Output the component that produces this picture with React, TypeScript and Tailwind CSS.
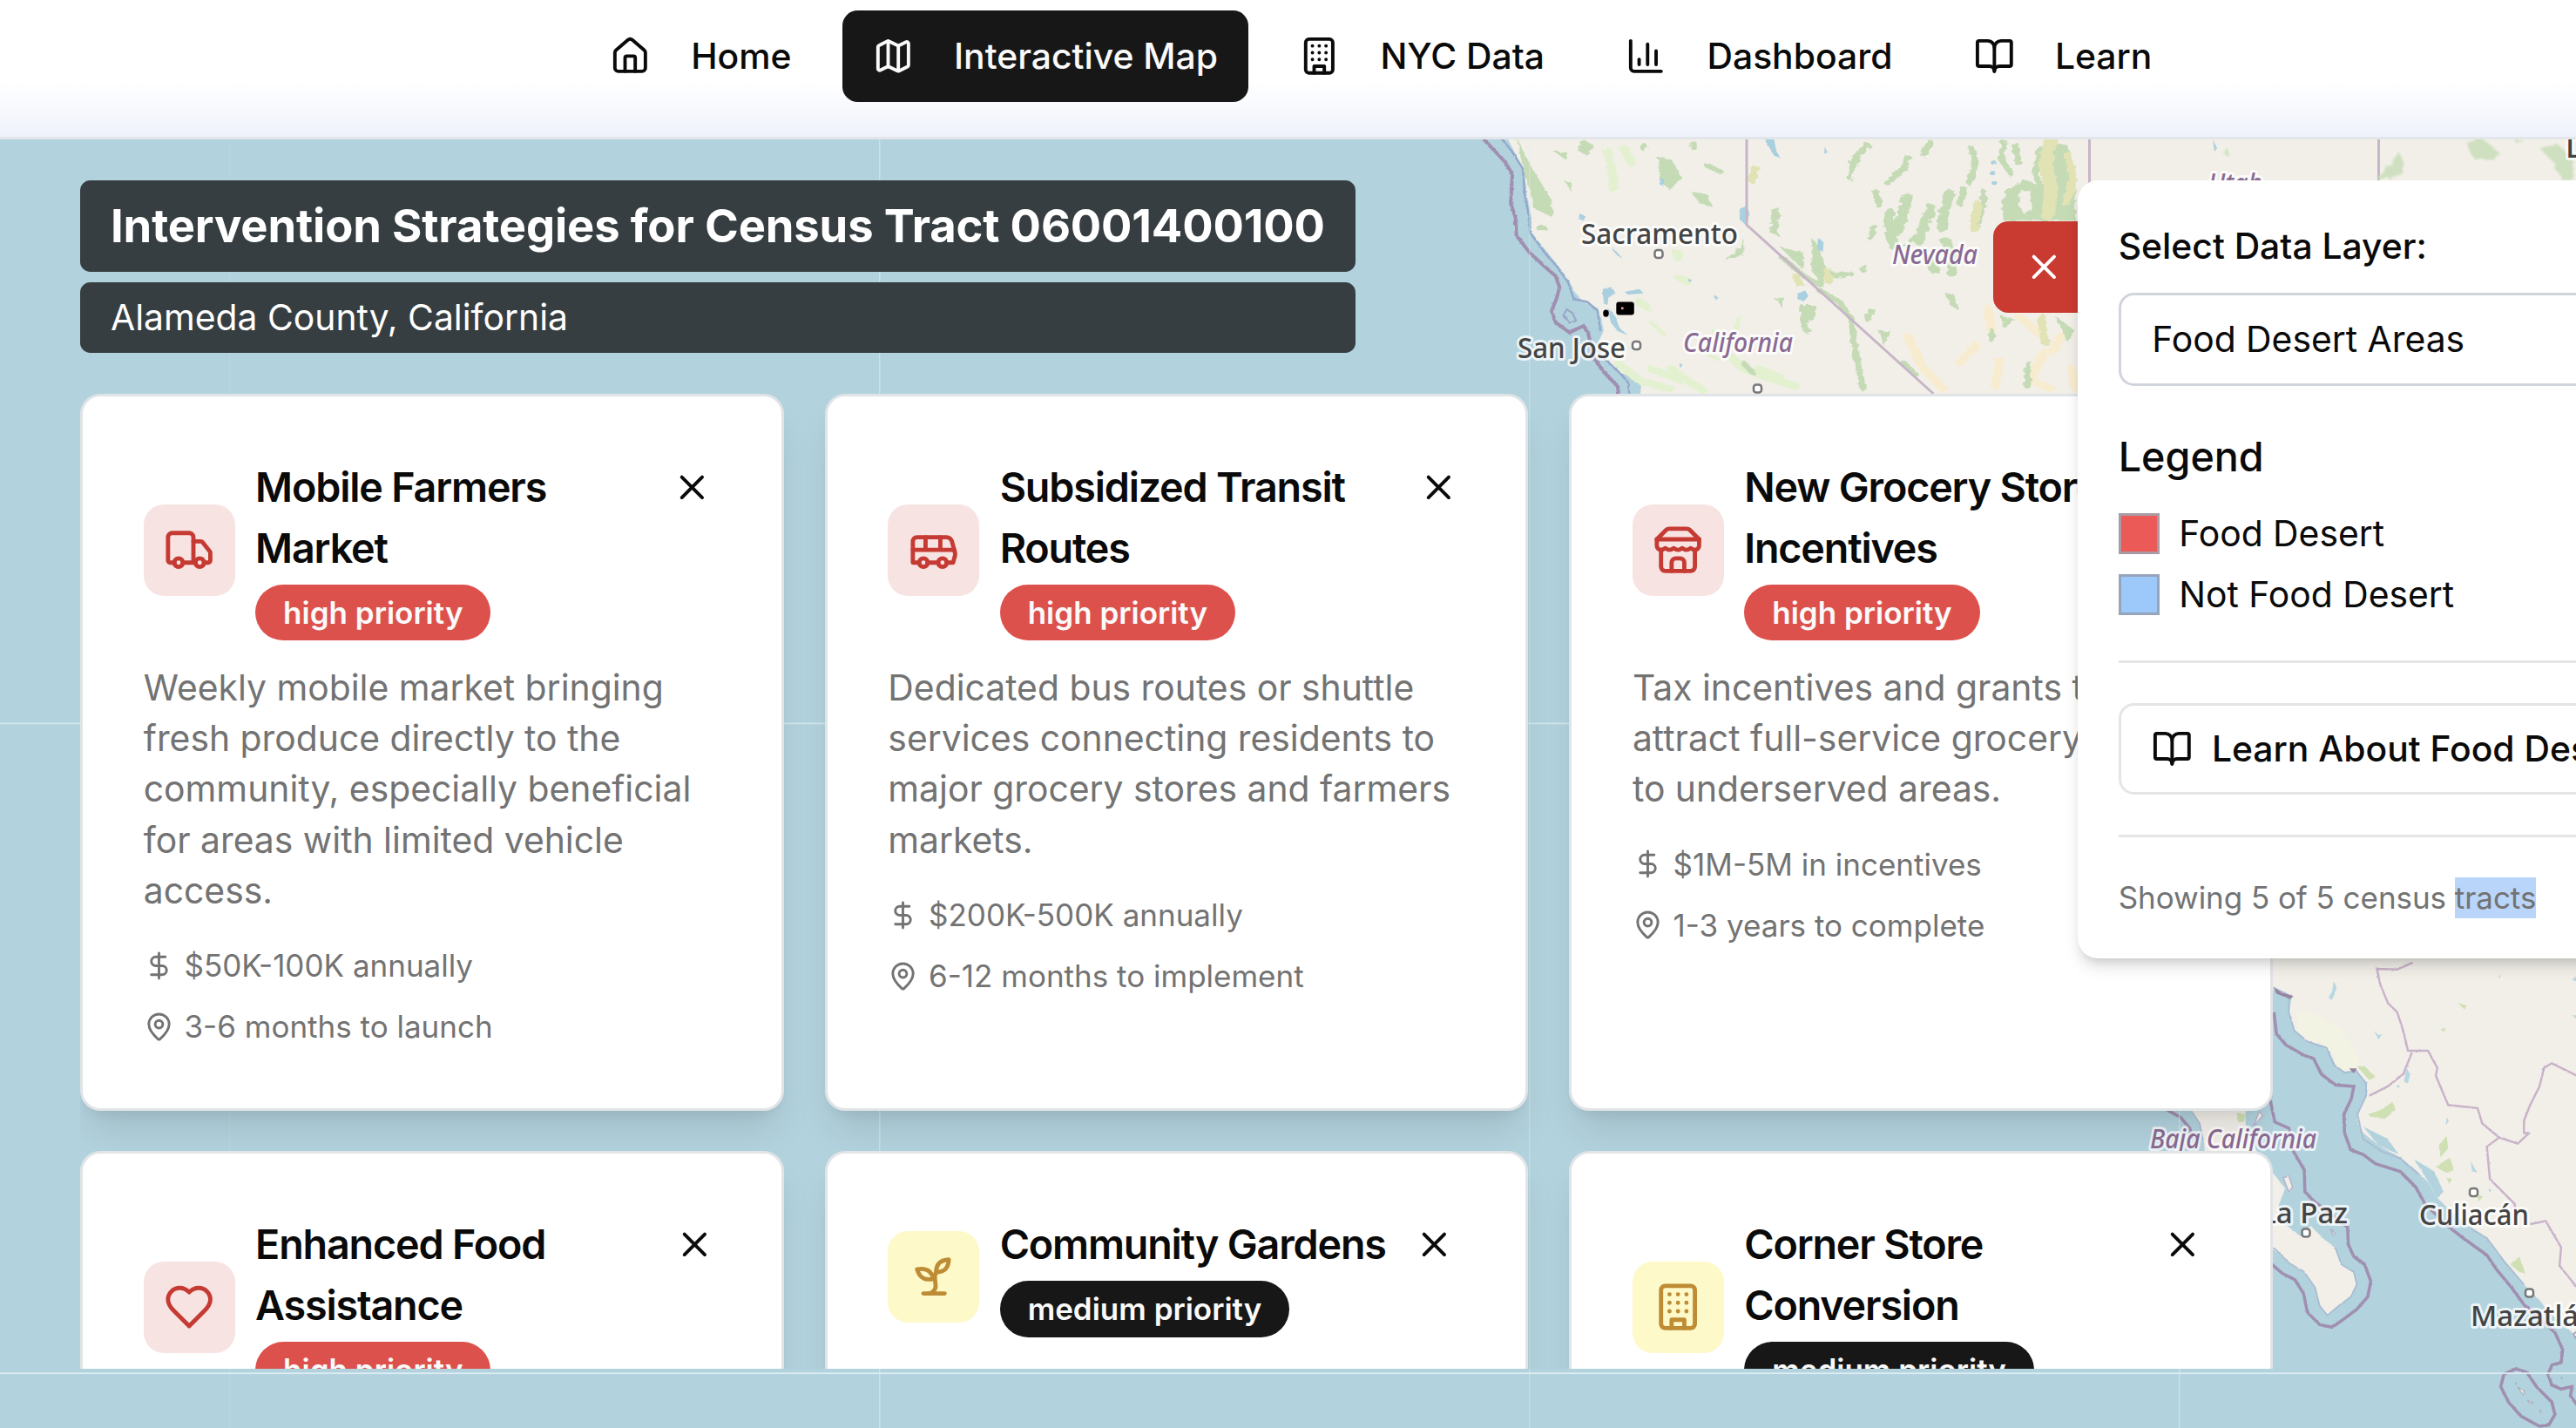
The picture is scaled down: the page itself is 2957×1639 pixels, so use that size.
import React from "react";

type IconName =
  | "home" | "map" | "building" | "chart" | "book" | "x"
  | "truck" | "bus" | "store" | "heart" | "sprout" | "dollar" | "pin";

const glyphs: Record<IconName, React.ReactNode> = {
  home: (
    <>
      <path d="M15 21v-8a1 1 0 0 0-1-1h-4a1 1 0 0 0-1 1v8" />
      <path d="M3 10a2 2 0 0 1 .709-1.528l7-5.999a2 2 0 0 1 2.582 0l7 5.999A2 2 0 0 1 21 10v9a2 2 0 0 1-2 2H5a2 2 0 0 1-2-2z" />
    </>
  ),
  map: (
    <>
      <path d="M14.106 5.553a2 2 0 0 0 1.788 0l3.659-1.83A1 1 0 0 1 21 4.619v12.764a1 1 0 0 1-.553.894l-4.553 2.277a2 2 0 0 1-1.788 0l-4.212-2.106a2 2 0 0 0-1.788 0l-3.659 1.83A1 1 0 0 1 3 19.381V6.618a1 1 0 0 1 .553-.894l4.553-2.277a2 2 0 0 1 1.788 0z" />
      <path d="M15 5.764v15" />
      <path d="M9 3.236v15" />
    </>
  ),
  building: (
    <>
      <rect width="16" height="20" x="4" y="2" rx="2" ry="2" />
      <path d="M9 22v-4h6v4" />
      <path d="M8 6h.01M16 6h.01M12 6h.01M12 10h.01M12 14h.01M16 10h.01M16 14h.01M8 10h.01M8 14h.01" />
    </>
  ),
  chart: (
    <>
      <path d="M3 3v16a2 2 0 0 0 2 2h16" />
      <path d="M18 17V9" />
      <path d="M13 17V5" />
      <path d="M8 17v-3" />
    </>
  ),
  book: (
    <>
      <path d="M12 7v14" />
      <path d="M3 18a1 1 0 0 1-1-1V4a1 1 0 0 1 1-1h5a4 4 0 0 1 4 4 4 4 0 0 1 4-4h5a1 1 0 0 1 1 1v13a1 1 0 0 1-1 1h-6a3 3 0 0 0-3 3 3 3 0 0 0-3-3z" />
    </>
  ),
  x: <path d="M18 6 6 18M6 6l12 12" />,
  truck: (
    <>
      <path d="M14 18V6a2 2 0 0 0-2-2H4a2 2 0 0 0-2 2v11a1 1 0 0 0 1 1h2" />
      <path d="M15 18H9" />
      <path d="M19 18h2a1 1 0 0 0 1-1v-3.65a1 1 0 0 0-.22-.624l-3.48-4.35A1 1 0 0 0 17.52 8H14" />
      <circle cx="17" cy="18" r="2" />
      <circle cx="7" cy="18" r="2" />
    </>
  ),
  bus: (
    <>
      <path d="M8 6v6M15 6v6M2 12h19.6" />
      <path d="M18 18h3s.5-1.7.8-2.8c.1-.4.2-.8.2-1.2 0-.4-.1-.8-.2-1.2l-1.4-5C20.1 6.8 19.1 6 18 6H4a2 2 0 0 0-2 2v10h3" />
      <circle cx="7" cy="18" r="2" />
      <path d="M9 18h5" />
      <circle cx="16" cy="18" r="2" />
    </>
  ),
  store: (
    <>
      <path d="m2 7 4.41-4.41A2 2 0 0 1 7.83 2h8.34a2 2 0 0 1 1.42.59L22 7" />
      <path d="M4 12v8a2 2 0 0 0 2 2h12a2 2 0 0 0 2-2v-8" />
      <path d="M15 22v-4a2 2 0 0 0-2-2h-2a2 2 0 0 0-2 2v4" />
      <path d="M2 7h20" />
      <path d="M22 7v3a2 2 0 0 1-2 2a2.7 2.7 0 0 1-1.59-.63.7.7 0 0 0-.82 0A2.7 2.7 0 0 1 16 12a2.7 2.7 0 0 1-1.59-.63.7.7 0 0 0-.82 0A2.7 2.7 0 0 1 12 12a2.7 2.7 0 0 1-1.59-.63.7.7 0 0 0-.82 0A2.7 2.7 0 0 1 8 12a2.7 2.7 0 0 1-1.59-.63.7.7 0 0 0-.82 0A2.7 2.7 0 0 1 4 12a2 2 0 0 1-2-2V7" />
    </>
  ),
  heart: (
    <path d="M19 14c1.49-1.46 3-3.21 3-5.5A5.5 5.5 0 0 0 16.5 3c-1.76 0-3 .5-4.5 2-1.5-1.5-2.74-2-4.5-2A5.5 5.5 0 0 0 2 8.5c0 2.3 1.5 4.05 3 5.5l7 7Z" />
  ),
  sprout: (
    <>
      <path d="M7 20h10" />
      <path d="M10 20c5.5-2.5.8-6.4 3-10" />
      <path d="M9.5 9.4c1.1.8 1.8 2.2 2.3 3.7-2 .4-3.5.4-4.8-.3-1.2-.6-2.3-1.9-3-4.2 2.8-.5 4.4 0 5.5.8z" />
      <path d="M14.1 6a7 7 0 0 0-1.1 4c1.9-.1 3.3-.6 4.3-1.4 1-1 1.6-2.3 1.7-4.6-2.7.1-4 1-4.9 2z" />
    </>
  ),
  dollar: (
    <>
      <path d="M12 2v20" />
      <path d="M17 5H9.5a3.5 3.5 0 0 0 0 7h5a3.5 3.5 0 0 1 0 7H6" />
    </>
  ),
  pin: (
    <>
      <path d="M20 10c0 4.993-5.539 10.193-7.399 11.799a1 1 0 0 1-1.202 0C9.539 20.193 4 14.993 4 10a8 8 0 0 1 16 0" />
      <circle cx="12" cy="10" r="3" />
    </>
  ),
};

function Icon({ name, className }: { name: IconName; className: string }) {
  return (
    <svg
      viewBox="0 0 24 24"
      fill="none"
      stroke="currentColor"
      strokeWidth="2"
      strokeLinecap="round"
      strokeLinejoin="round"
      className={"shrink-0 " + className}
    >
      {glyphs[name]}
    </svg>
  );
}

/* ---------- Base map ---------- */

type Label = { text: string; x: number; y: number; w?: number; size: number; italic?: boolean; end?: boolean };

const labels: Label[] = [
  { text: "Sacramento", x: 1815, y: 279.5, w: 180, size: 33 },
  { text: "San Jose", x: 1742, y: 410.5, w: 124, size: 33 },
  { text: "Nevada", x: 2172, y: 302.5, w: 98, size: 30, italic: true },
  { text: "California", x: 1932, y: 403.5, w: 126, size: 30, italic: true },
  { text: "Utah", x: 2535, y: 221, w: 62, size: 30, italic: true },
  { text: "Denver", x: 2945, y: 180.5, size: 35 },
  { text: "Baja California", x: 2468, y: 1317.5, w: 191, size: 30, italic: true },
  { text: "La Paz", x: 2695, y: 1404, size: 33, end: true },
  { text: "Culiacán", x: 2777, y: 1406, w: 126, size: 33 },
  { text: "Mazatlán", x: 2836, y: 1521.5, size: 33 },
];

const towns: [number, number][] = [
  [1904, 291.5], [1878.5, 396.5], [2017.5, 446], [2647, 1415], [2839.5, 1368.5], [2903.5, 1484],
];

function BaseMap() {
  return (
    <svg className="absolute inset-0 h-full w-full" viewBox="0 160 2957 1479" preserveAspectRatio="none">
      <defs>
        <filter id="rough" x="-5%" y="-5%" width="110%" height="110%">
          <feTurbulence type="fractalNoise" baseFrequency="0.06" numOctaves="3" seed="4" />
          <feDisplacementMap in="SourceGraphic" scale="17" />
          <feGaussianBlur stdDeviation="1.3" />
        </filter>
        <filter id="jag" x="-5%" y="-5%" width="110%" height="110%">
          <feTurbulence type="fractalNoise" baseFrequency="0.09" numOctaves="2" seed="9" />
          <feDisplacementMap in="SourceGraphic" scale="6" xChannelSelector="R" yChannelSelector="G" />
          <feGaussianBlur stdDeviation="0.9" />
        </filter>
      </defs>
      <rect x="0" y="160" width="2957" height="1479" fill="#b2d2dd" />

      {/* Northern California, Nevada and Utah */}
      <g transform="translate(1680 150) scale(0.4592 0.3333)" filter="url(#jag)">
        <path
          fill="#f2efe9"
          d="M100 0 130 80 152 140 158 220 170 300 170 350 210 420 240 470 265 520 280 560 300 590 335 610 345 650 350 690 340 720 345 770 370 810 395 840 430 835 445 870 440 930H2800V0Z"
        />
        <path
          fill="none" stroke="#93a9cb" strokeWidth="2.5" vectorEffect="non-scaling-stroke"
          d="M85 10 120 70 148 130 153 220 164 300 166 350 206 425 235 470 262 525 276 580 310 590 335 620 342 690M340 770 395 840 412 870 415 920"
        />
        <path
          fill="none" stroke="#a08fb0" strokeWidth="4" vectorEffect="non-scaling-stroke"
          d="M30 0 75 65 105 110 122 150 118 250 130 300 132 360 165 420 205 470 230 500 240 540 232 580 220 620 230 660 265 695 300 672 312 700 325 780 350 830 385 880 390 930"
        />
        <path
          fill="none" stroke="#9aa6c6" strokeWidth="2" vectorEffect="non-scaling-stroke"
          d="M258 615 250 635 265 662 282 655 272 628Z"
        />
      </g>

      <g transform="translate(1680 150) scale(0.4592 0.3333)" filter="url(#rough)" strokeLinecap="round" fill="none">
        {/* pale grassland */}
        <g stroke="#e3f1d1" strokeWidth="24">
          <path d="M360 70 370 130 375 200M400 60 420 110M535 420V440M385 800 440 860 520 890M520 820 570 870 600 895M670 780 700 820 760 850 830 880M440 590 460 610M540 505 560 520M470 820 540 860M740 820 790 850" />
        </g>
        <g stroke="#e3f1d1" strokeWidth="12">
          <path d="M470 660 500 700M600 760 640 790M690 640 680 690M630 690 640 720" />
        </g>
        {/* deserts and dry basins */}
        <g stroke="#f8ecd0" strokeWidth="24">
          <path d="M1310 610 1320 690M1110 710 1150 820 1200 890M1240 800 1280 740M1340 790 1330 880M1450 760 1420 860 1470 890M1500 700 1470 760M1390 640 1440 700M1520 820 1530 890" />
        </g>
        {/* forests */}
        <g fill="#c4dbb5">
          <path d="M130 20 160 100 190 170 220 240 225 300 180 270 165 200 150 130ZM485 90 520 100 545 160 515 205 490 170ZM285 70 300 30 325 50 310 85ZM225 70 260 75 255 100ZM250 170 270 180 270 210ZM570 210 610 220 620 260 590 250ZM655 445 690 400 700 370 700 430ZM770 270 790 265 785 360 765 350ZM870 370 890 400 905 470 900 540 870 480ZM790 400 850 420 850 480ZM840 600 880 600 880 640 845 690ZM1345 640 1380 650 1350 680ZM1480 640 1530 690 1510 730ZM1205 560 1225 560 1240 620 1215 600ZM1040 690 1070 690 1050 740ZM780 580 800 570 795 610Z" />
          <path d="M1360 200 1400 170 1450 190 1480 40 1510 50 1530 200 1530 310 1350 310 1345 250Z" />
        </g>
        <g stroke="#c4dbb5" strokeWidth="16">
          <path d="M1010 50 980 90 965 160M1110 90 1100 130 1060 180M1165 40 1150 80M1270 60 1280 110 1265 180M1350 40 1345 100 1370 150M1380 50 1385 110M1440 60 1430 150 1445 200M1030 210 1040 260M1025 330 1020 370M1250 200 1240 250M1300 210 1300 260 1280 330M900 480 930 500 965 492M890 550 940 590 970 650 975 720 985 800 1000 890M850 660 860 690M800 440 850 500 890 530M1130 360 1110 400M1020 620 1010 650M1000 470 1000 480M1410 800V880M1320 690V720M1100 800 1130 840M450 50V60M575 45V58M190 335H200M700 800 720 830M610 120 640 140" />
        </g>
        <g stroke="#c4dbb5" strokeWidth="26">
          <path d="M1065 280 1065 350 1078 400M1110 230 1095 300 1085 350M1215 215 1200 290 1195 335M1168 265 1150 330 1140 380M1205 380 1222 430 1220 490M1160 440 1178 480" />
        </g>
        <path stroke="#e2e3b4" strokeWidth="34" d="M1470 20 1455 120 1470 200 1460 290" />
        <path stroke="#e2e3b4" strokeWidth="20" d="M1510 80 1525 170 1505 250M1445 640 1455 730M1285 250 1275 340M730 130 720 170M830 500 840 530M910 480 915 520" />
        <path fill="#f2efe9" d="M1392 205 1415 205 1422 270 1400 285 1385 250Z" />
      </g>

      <g transform="translate(1680 150) scale(0.4592 0.3333)" filter="url(#jag)" fill="#aad0e0">
        <path d="M750 20H775L782 70 792 95 775 85ZM690 270 705 258 715 280 708 328 690 305ZM886 370 900 385 898 420 884 405ZM835 560 855 550 862 570 850 588 835 580ZM348 545 370 538 380 560 362 575 360 600 350 595ZM360 610 380 640 390 680 412 705 385 690 368 660ZM290 285 305 295 300 310 288 305ZM370 400 385 420 398 442 380 425ZM402 555 440 545 450 560 410 565ZM903 55 909 75 902 80ZM490 165 502 165 500 190 492 185ZM562 510 572 514 566 522ZM540 800 548 805 542 818ZM628 565 636 575 630 585Z" />
        <circle cx="1325" cy="110" r="7" />
        <circle cx="1323" cy="146" r="7" />
        <circle cx="1327" cy="180" r="7" />
      </g>

      <g fill="none" stroke="#c7b5c8" strokeWidth="3">
        <path d="M2005 150V258L2219.5 452" />
        <path d="M2398.5 150V220" />
        <path d="M2730.5 150V220" />
      </g>
      <g filter="url(#rough)" fill="#cfe0c0">
        <path d="M2735 190 2755 176 2762 190 2745 208 2733 210ZM2830 166 2850 160 2866 172 2862 184 2838 180ZM2915 170 2935 165 2952 180 2957 205 2938 205 2930 185ZM2552 176 2560 172 2560 180ZM2888 162 2895 160 2890 168Z" />
      </g>
      <path d="M2540 160 2545 170 2542 174Z" fill="#aad0e0" />

      {/* Baja California and the Mexican mainland */}
      <g transform="translate(2400 1080) scale(0.3552)" filter="url(#jag)">
        <path
          fill="#f2efe9"
          d="M560 40V150L650 175 642 230 660 290 700 325 765 345 790 400 820 425 860 420 890 460 890 500 870 540 860 580 880 620 930 660 1000 700 1050 740 1090 780 1120 830 1150 860 1220 920 1280 960 1340 1040 1400 1110 1450 1160 1480 1200 1530 1240 1600 1310V40Z"
        />
        <path
          fill="#f2efe9"
          d="M300 520 350 590 365 640 370 700 560 700 590 750 628 800 605 860 620 910 680 955 710 920 755 965 790 990 810 1045 850 1070 860 1110 840 1150 800 1180 765 1210 740 1180 725 1120 690 1070 640 1040 560 970 360 720 540 690 500 590 500 520Z"
        />
        <path fill="#f2efe9" stroke="#b6b2cb" strokeWidth="4" d="M545 550 555 565 525 600ZM622 765 640 760 652 795 640 810ZM775 930 790 945 782 950Z" />
        <path fill="#b2d2dd" d="M880 600 960 640 995 690 930 660ZM1045 705 1110 745 1140 810 1120 830 1080 760ZM1095 765 1110 770 1112 800 1098 790Z" />
        <path fill="#f3f3e4" d="M665 220 740 240 810 290 860 360 870 410 810 420 780 360 720 325 670 290Z" />
        <g fill="#cfe0b4">
          <path d="M895 560 940 545 975 520 985 545 950 575 905 568ZM1355 1045 1385 1020 1405 1075 1385 1070ZM1185 200 1215 208 1208 222ZM1132 285 1145 280 1140 295ZM1125 660 1150 630 1155 670 1130 700ZM1115 730 1160 700 1175 740 1150 750ZM1150 765 1168 770 1158 785ZM1245 820 1268 825 1255 842ZM860 405 885 405 920 440 900 450ZM472 555 500 560 495 585 475 585Z" />
        </g>
        <path
          fill="none" stroke="#a9bcd3" strokeWidth="5"
          d="M590 150 640 175 640 230 658 290 700 325 762 345 785 400 820 425 858 420 890 460 890 500 862 560 880 640 940 680 1000 702 1060 755M590 990 640 1040 690 1070 725 1120 740 1180 765 1210 800 1180 840 1150 860 1110 850 1070 810 1045 790 990M1230 930 1280 960 1340 1040 1400 1110M325 550 352 590 362 640"
        />
        <path
          fill="none" stroke="#a08fb0" strokeWidth="10"
          d="M592 230 600 300 630 335 690 370 720 380 745 430 790 465 850 470 842 510 818 560 820 620 840 675 880 690 920 720 1000 745 1050 795 1080 850 1165 930 1210 965 1280 1015 1310 1060 1360 1120 1400 1175 1500 1265 1525 1320 1520 1362 1490 1370 1478 1400 1490 1435 1520 1448 1555 1440 1550 1470 1580 1510M580 515 595 585 640 605 655 680 690 740 692 810 720 840 830 925 832 980 850 1020 885 1045 905 1100 895 1150 860 1190 820 1220 780 1248 740 1240 700 1200 688 1140 660 1095 620 1075 585 1045M235 540 290 570 320 605 330 640M1375 1382 1410 1395 1440 1440 1490 1490 1500 1530 1480 1564 1450 1568 1390 1535 1350 1490 1325 1440 1335 1400Z"
        />
        <path
          fill="none" stroke="#c9b3c9" strokeWidth="7"
          d="M1040 70 990 92 925 90 935 140 960 200 990 230 1010 290 1025 355 1090 355 1120 410 1115 435 1155 530 1250 540 1265 590 1320 635 1380 655 1415 622 1400 620 1400 580 1420 530 1450 470 1465 410 1490 395 1580 440M1038 360 1010 430 960 470 900 500M1320 635 1280 665 1290 770 1370 850 1375 900M1420 915 1470 905 1520 990 1515 1050 1580 1130"
        />
        <path fill="#95859f" d="M590 150 620 168 655 178 645 188 600 170ZM835 412 860 412 850 428Z" />
        <g fill="#b7d7e1">
          <path d="M785 130 795 150 780 190 768 182 780 165ZM915 290 930 305 942 300 930 318ZM1020 410 1032 430 1025 460 1012 455ZM1228 710 1240 735 1250 748 1232 745ZM1150 570 1157 580 1148 597ZM1318 110 1326 114 1320 122ZM1555 125 1568 115V130ZM1555 240H1568V250ZM1285 800 1296 805 1288 812ZM988 465 1000 468 992 476Z" />
        </g>
        <path fill="#e6e6d0" stroke="#9c94b4" strokeWidth="2" d="M1380 1442 1402 1455 1398 1468ZM1412 1485 1430 1492 1420 1496ZM1450 1515 1458 1518 1452 1524ZM1371 1428 1376 1430 1373 1434ZM1520 1410 1525 1412 1521 1415Z" />
        <path fill="#f2efe9" stroke="#a08fb0" strokeWidth="4" d="M1580 1255 1560 1270 1572 1290Z" />
      </g>

      {/* tile seams */}
      <g fill="#dcecf2">
        <rect x="0" y="829.5" width="2957" height="1.8" opacity="0.75" />
        <rect x="0" y="1575.3" width="2957" height="1.8" />
        <rect x="263" y="160" width="1.5" height="1479" opacity="0.15" />
        <rect x="1009" y="160" width="1.5" height="1479" opacity="0.6" />
        <rect x="1755" y="160" width="1.5" height="1479" opacity="0.4" />
        <rect x="2501" y="1100" width="1.5" height="539" opacity="0.6" />
      </g>

      {/* places */}
      {towns.map(([x, y]) => (
        <rect key={x} x={x - 4.5} y={y - 4.5} width="9" height="9" rx="3" fill="#fff" stroke="#777" strokeWidth="2.5" />
      ))}
      {labels.map((l) => (
        <text
          key={l.text}
          x={l.x}
          y={l.y}
          textLength={l.w}
          textAnchor={l.end ? "end" : "start"}
          lengthAdjust="spacingAndGlyphs"
          fontFamily='"Noto Sans", sans-serif'
          fontSize={l.size}
          fontWeight="500"
          fontStyle={l.italic ? "italic" : "normal"}
          fill={l.italic ? "#8a6a93" : "#444"}
          stroke="#fff"
          strokeOpacity="0.75"
          strokeWidth="6"
          strokeLinejoin="round"
          paintOrder="stroke"
        >
          {l.text}
        </text>
      ))}

      {/* census tracts */}
      <ellipse cx="1843.5" cy="359.6" rx="3.3" ry="4.2" fill="#000" />
      <rect x="1855.3" y="346.5" width="20.5" height="15" rx="3" fill="#000" />
      <rect x="1861" y="352.5" width="2.6" height="2.6" fill="#e99" />
    </svg>
  );
}

/* ---------- Header ---------- */

const nav: { icon: IconName; label: string; active?: boolean }[] = [
  { icon: "home", label: "Home" },
  { icon: "map", label: "Interactive Map", active: true },
  { icon: "building", label: "NYC Data" },
  { icon: "chart", label: "Dashboard" },
  { icon: "book", label: "Learn" },
];

function Header() {
  return (
    <header className="h-[160px] shrink-0 border-b-[3px] border-[#e2e5e9] bg-linear-to-b from-white from-60% to-[#eff2fb] pt-[11.7px] pl-[665px]">
      <nav className="flex gap-[23.3px]">
        {nav.map((n) => (
          <a
            key={n.label}
            className={
              "flex h-[105px] items-center gap-[46.5px] rounded-[17.5px] px-[35px] text-[40.83px] leading-[58.3px] font-medium whitespace-nowrap " +
              (n.active ? "bg-[#171717] text-[#fafafa]" : "text-[#0a0a0a]")
            }
          >
            <Icon name={n.icon} className="size-[46.7px]" />
            {n.label}
          </a>
        ))}
      </nav>
    </header>
  );
}

/* ---------- Strategy cards ---------- */

type Strategy = {
  icon: IconName;
  title: string[];
  priority: "high" | "medium";
  text: string[];
  cost: string;
  time: string;
  close: string;
};

const strategies: Strategy[] = [
  {
    icon: "truck",
    title: ["Mobile Farmers", "Market"],
    priority: "high",
    text: ["Weekly mobile market bringing", "fresh produce directly to the", "community, especially beneficial", "for areas with limited vehicle", "access."],
    cost: "$50K-100K annually",
    time: "3-6 months to launch",
    close: "w-[67px]",
  },
  {
    icon: "bus",
    title: ["Subsidized Transit", "Routes"],
    priority: "high",
    text: ["Dedicated bus routes or shuttle", "services connecting residents to", "major grocery stores and farmers", "markets."],
    cost: "$200K-500K annually",
    time: "6-12 months to implement",
    close: "w-[63px]",
  },
  {
    icon: "store",
    title: ["New Grocery Store", "Incentives"],
    priority: "high",
    text: ["Tax incentives and grants to", "attract full-service grocery stores", "to underserved areas."],
    cost: "$1M-5M in incentives",
    time: "1-3 years to complete",
    close: "w-[63px]",
  },
  {
    icon: "heart",
    title: ["Enhanced Food", "Assistance"],
    priority: "high",
    text: ["Expand SNAP benefits and", "farmers market matching."],
    cost: "$100K-300K annually",
    time: "3-6 months to implement",
    close: "w-[62px]",
  },
  {
    icon: "sprout",
    title: ["Community Gardens"],
    priority: "medium",
    text: ["Convert vacant lots into", "productive community gardens."],
    cost: "$20K-50K per garden",
    time: "6-12 months to establish",
    close: "w-[73px]",
  },
  {
    icon: "building",
    title: ["Corner Store", "Conversion"],
    priority: "medium",
    text: ["Help existing corner stores", "stock fresh produce."],
    cost: "$50K-100K per store",
    time: "3-6 months per store",
    close: "w-[63.5px]",
  },
];

function Lines({ lines }: { lines: string[] }) {
  return (
    <>
      {lines.map((line) => (
        <span key={line} className="block whitespace-nowrap">
          {line}
        </span>
      ))}
    </>
  );
}

function Card({ s }: { s: Strategy }) {
  const high = s.priority === "high";
  return (
    <article className="flex flex-col rounded-[23.3px] border-[3px] border-[#e1e4e6] bg-white pt-[69.2px] pr-[69px] pb-[69.6px] pl-[69.8px] shadow-[0_29px_44px_-9px_rgba(0,0,0,0.1),0_12px_17px_-12px_rgba(0,0,0,0.1)]">
      <div className="flex items-start justify-between">
        <div className="flex items-center gap-[23.3px]">
          <div
            className={
              "flex size-[105px] shrink-0 items-center justify-center rounded-[23.3px] " +
              (high ? "bg-[#f8e3e3] text-[#c53b33]" : "bg-[#fdf9c9] text-[#be8c34]")
            }
          >
            <Icon name={s.icon} className="size-[58.3px]" />
          </div>
          <div className="pb-[3px]">
            <h3 className="text-[46.67px] leading-[70px] font-semibold tracking-[-0.025em] text-[#0a0a0a]">
              <Lines lines={s.title} />
            </h3>
            <span
              className={
                "mt-[7px] flex h-[64.2px] w-fit items-center rounded-full px-[32px] text-[35px] leading-[46.7px] font-semibold whitespace-nowrap text-[#fafafa] " +
                (high ? "bg-[#dd514c]" : "bg-[#171717]")
              }
            >
              {s.priority} priority
            </span>
          </div>
        </div>
        <button className={"-ml-[20px] flex h-[70px] shrink-0 items-center justify-center text-[#0a0a0a] " + s.close}>
          <Icon name="x" className="size-[46.7px]" />
        </button>
      </div>
      <p className="mt-[21.3px] text-[40.83px] leading-[58.33px] text-[#737373]">
        <Lines lines={s.text} />
      </p>
      <div className="mt-[34px] flex flex-col gap-[23.3px] text-[35px] leading-[46.7px] text-[#737373]">
        <div className="flex items-center gap-[11.7px]">
          <Icon name="dollar" className="size-[35px]" />
          <span>{s.cost}</span>
        </div>
        <div className="flex items-center gap-[11.7px]">
          <Icon name="pin" className="size-[35px]" />
          <span>{s.time}</span>
        </div>
      </div>
    </article>
  );
}

/* ---------- Layer panel ---------- */

function LayerPanel() {
  return (
    <aside className="absolute top-[47px] left-[2385px] w-[840px] rounded-[23.3px] bg-white px-[46.7px] pt-[45.5px] pb-[46.7px] text-[40.83px] leading-[58.3px] text-[#0a0a0a] shadow-[0_12px_18px_-3px_rgba(0,0,0,0.14),0_6px_12px_-6px_rgba(0,0,0,0.14)]">
      <div className="font-medium">Select Data Layer:</div>
      <div className="mt-[24.8px] flex h-[107px] items-center rounded-[17.5px] border-[3px] border-[#d1d5db] px-[35.5px]">
        Food Desert Areas
      </div>
      <h4 className="mt-[46.7px] text-[46.67px] leading-[70px] font-medium">Legend</h4>
      <div className="mt-[23.6px] flex flex-col gap-[11.7px]">
        <div className="flex items-center gap-[22.5px]">
          <span className="size-[47px] border-[3px] border-[#a99ba6] bg-[#eb5a56]" />
          Food Desert
        </div>
        <div className="flex items-center gap-[22.5px]">
          <span className="size-[47px] border-[3px] border-[#96a5bb] bg-[#9dc8fa]" />
          Not Food Desert
        </div>
      </div>
      <div className="mt-[46.5px] border-t-[3px] border-[#e5e5e5] pt-[46px]">
        <button className="flex h-[105px] w-full items-center gap-[22.5px] rounded-[17.5px] border-[3px] border-[#e5e5e5] px-[35px] font-medium whitespace-nowrap">
          <Icon name="book" className="size-[46.7px]" />
          Learn About Food Deserts
        </button>
      </div>
      <div className="mt-[46.7px] border-t-[3px] border-[#e5e5e5] pt-[45.7px] text-[35px] leading-[46.7px] tracking-[-0.05px] text-[#737373]">
        Showing 5 of 5 census <span className="inline-block bg-[#b9d5f9] align-top">tracts</span>
      </div>
    </aside>
  );
}

export default function App() {
  return (
    <div className="flex h-[1639px] w-full flex-col overflow-hidden bg-white font-['Inter',sans-serif]">
      <Header />
      <main className="relative flex-1 overflow-hidden">
        <BaseMap />
        <section className="relative mt-[47px] ml-[92px] h-[1363.7px] w-[2517px] overflow-hidden">
          <div className="flex w-fit flex-col gap-[11.7px] text-white">
            <h2 className="rounded-[11.7px] bg-[#363e41] px-[35px] py-[11.7px] text-[52.5px] leading-[81.5px] font-bold tracking-[-0.14px] whitespace-nowrap">
              Intervention Strategies for Census Tract 06001400100
            </h2>
            <p className="rounded-[11.7px] bg-[#363e41] px-[35px] py-[11.7px] text-[40.83px] leading-[58.3px]">
              Alameda County, California
            </p>
          </div>
          <div className="mt-[46.7px] grid grid-cols-3 gap-[46.7px]">
            {strategies.map((s) => (
              <Card key={s.title[0]} s={s} />
            ))}
          </div>
        </section>
        <button className="absolute top-[93.5px] left-[2287.5px] flex h-[105px] w-[116.7px] items-center justify-center rounded-[17.5px] bg-[#c93a31] text-white">
          <Icon name="x" className="size-[46.7px]" />
        </button>
        <LayerPanel />
      </main>
    </div>
  );
}
